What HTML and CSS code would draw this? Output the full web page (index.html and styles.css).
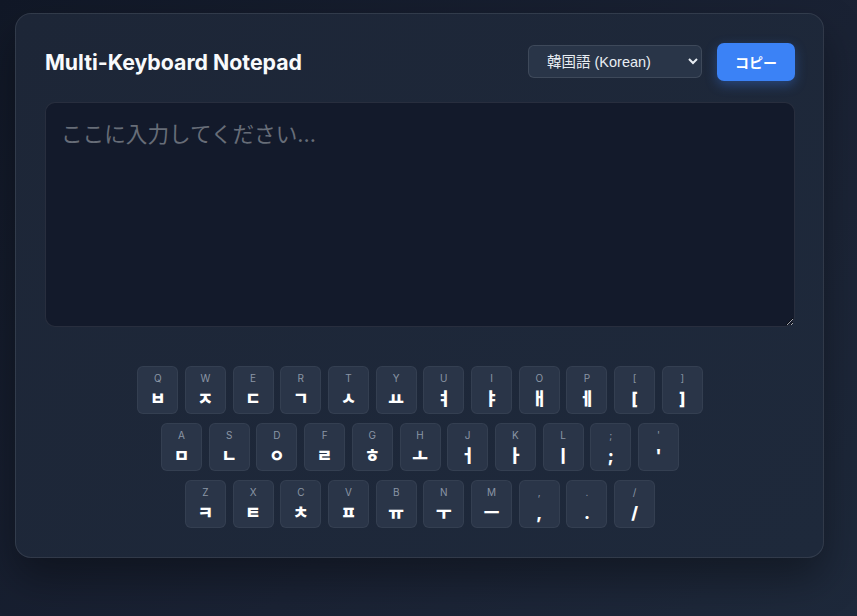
FILE: index.html
```html
<!DOCTYPE html>
<html lang="ja">
<head>
<meta charset="utf-8">
<title>Multi-Keyboard Notepad</title>
<link rel="stylesheet" href="styles.css">
</head>
<body>
<div class="card">
  <div class="header">
    <h1 class="title">Multi-Keyboard Notepad</h1>
    <div class="controls">
      <select class="lang">
        <option>韓国語 (Korean)</option>
      </select>
      <button class="copy">コピー</button>
    </div>
  </div>
  <textarea class="pad" placeholder="ここに入力してください..."></textarea>
  <div class="keyboard">
    <div class="row">
      <div class="key"><span class="lbl">Q</span><span class="ch">ㅂ</span></div>
      <div class="key"><span class="lbl">W</span><span class="ch">ㅈ</span></div>
      <div class="key"><span class="lbl">E</span><span class="ch">ㄷ</span></div>
      <div class="key"><span class="lbl">R</span><span class="ch">ㄱ</span></div>
      <div class="key"><span class="lbl">T</span><span class="ch">ㅅ</span></div>
      <div class="key"><span class="lbl">Y</span><span class="ch">ㅛ</span></div>
      <div class="key"><span class="lbl">U</span><span class="ch">ㅕ</span></div>
      <div class="key"><span class="lbl">I</span><span class="ch">ㅑ</span></div>
      <div class="key"><span class="lbl">O</span><span class="ch">ㅐ</span></div>
      <div class="key"><span class="lbl">P</span><span class="ch">ㅔ</span></div>
      <div class="key"><span class="lbl">[</span><span class="ch">[</span></div>
      <div class="key"><span class="lbl">]</span><span class="ch">]</span></div>
    </div>
    <div class="row">
      <div class="key"><span class="lbl">A</span><span class="ch">ㅁ</span></div>
      <div class="key"><span class="lbl">S</span><span class="ch">ㄴ</span></div>
      <div class="key"><span class="lbl">D</span><span class="ch">ㅇ</span></div>
      <div class="key"><span class="lbl">F</span><span class="ch">ㄹ</span></div>
      <div class="key"><span class="lbl">G</span><span class="ch">ㅎ</span></div>
      <div class="key"><span class="lbl">H</span><span class="ch">ㅗ</span></div>
      <div class="key"><span class="lbl">J</span><span class="ch">ㅓ</span></div>
      <div class="key"><span class="lbl">K</span><span class="ch">ㅏ</span></div>
      <div class="key"><span class="lbl">L</span><span class="ch">ㅣ</span></div>
      <div class="key"><span class="lbl">;</span><span class="ch">;</span></div>
      <div class="key"><span class="lbl">'</span><span class="ch">'</span></div>
    </div>
    <div class="row">
      <div class="key"><span class="lbl">Z</span><span class="ch">ㅋ</span></div>
      <div class="key"><span class="lbl">X</span><span class="ch">ㅌ</span></div>
      <div class="key"><span class="lbl">C</span><span class="ch">ㅊ</span></div>
      <div class="key"><span class="lbl">V</span><span class="ch">ㅍ</span></div>
      <div class="key"><span class="lbl">B</span><span class="ch">ㅠ</span></div>
      <div class="key"><span class="lbl">N</span><span class="ch">ㅜ</span></div>
      <div class="key"><span class="lbl">M</span><span class="ch">ㅡ</span></div>
      <div class="key"><span class="lbl">,</span><span class="ch">,</span></div>
      <div class="key"><span class="lbl">.</span><span class="ch">.</span></div>
      <div class="key"><span class="lbl">/</span><span class="ch">/</span></div>
    </div>
  </div>
</div>
</body>
</html>
```

FILE: styles.css
```css
html, body {
  margin: 0;
  padding: 0;
}
body {
  min-height: 616px;
  background: linear-gradient(135deg, #111827 0%, #1a2234 60%, #1e293b 100%);
  font-family: Inter, "Noto Sans CJK JP", sans-serif;
  color: #f1f5f9;
  padding: 13px 0 0 15px;
  box-sizing: border-box;
}
.card {
  width: 809px;
  height: 545px;
  box-sizing: border-box;
  background: linear-gradient(135deg, #1d2637 0%, #1e293b 100%);
  border: 1px solid rgba(255, 255, 255, 0.09);
  border-radius: 16px;
  padding: 29px 28px 28px 29px;
  box-shadow: 0 20px 40px rgba(0, 0, 0, 0.35);
  display: flex;
  flex-direction: column;
}
.header {
  display: flex;
  justify-content: space-between;
  align-items: center;
  height: 37px;
  margin-bottom: 22px;
}
.title {
  margin: 0;
  font-size: 21.3px;
  font-weight: 700;
  color: #f8fafc;
  letter-spacing: 0;
}
.controls {
  display: flex;
  align-items: center;
  gap: 15px;
}
.lang {
  width: 174px;
  height: 33px;
  margin-left: 1px;
  background: #293548;
  color: #e8edf3;
  border: 1px solid rgba(255, 255, 255, 0.1);
  border-radius: 6px;
  padding: 0 8px 0 14px;
  font-family: "Liberation Sans", "Noto Sans CJK JP", sans-serif;
  font-size: 14.5px;
}
.copy {
  width: 78px;
  height: 38px;
  background: #3b82f6;
  color: #ffffff;
  border: none;
  border-radius: 7px;
  font-family: "Liberation Sans", "Noto Sans CJK JP", sans-serif;
  font-size: 14px;
  font-weight: 700;
  box-shadow: 0 4px 12px rgba(59, 130, 246, 0.35);
}
.pad {
  display: block;
  width: 750px;
  height: 225px;
  box-sizing: border-box;
  background: #131a2b;
  border: 1px solid rgba(255, 255, 255, 0.09);
  border-radius: 10px;
  padding: 14px 15px;
  font-family: Inter, "Noto Sans CJK JP", sans-serif;
  font-size: 21.6px;
  color: #e2e8f0;
  resize: vertical;
  margin: 0;
}
.pad::placeholder {
  color: #676d78;
}
.keyboard {
  margin-top: 39px;
  display: flex;
  flex-direction: column;
  align-items: center;
  gap: 8.8px;
}
.row {
  display: flex;
  gap: 6.7px;
}
.key {
  width: 41px;
  height: 48px;
  box-sizing: border-box;
  background: #2a3548;
  border: 1px solid rgba(255, 255, 255, 0.05);
  border-radius: 6px;
  display: flex;
  flex-direction: column;
  align-items: center;
  padding-top: 5px;
}
.lbl {
  font-family: Inter, sans-serif;
  font-size: 10px;
  line-height: 12px;
  color: #8b95a5;
}
.ch {
  margin-top: 5px;
  font-family: Inter, "Noto Sans CJK KR", sans-serif;
  font-size: 17px;
  font-weight: 800;
  line-height: 20px;
  color: #ffffff;
}
```
